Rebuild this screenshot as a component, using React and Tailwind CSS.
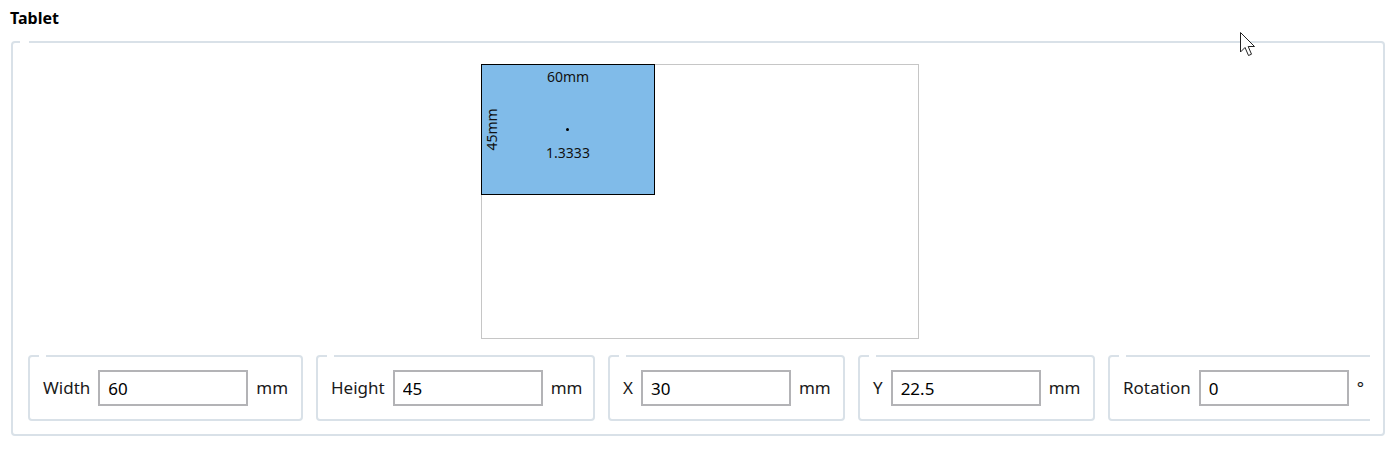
import React from "react";

const font = { fontFamily: '"Noto Sans", "Open Sans", sans-serif' };

const fields = [
  { label: "Width", value: "60", unit: "mm", w: "w-[275px]" },
  { label: "Height", value: "45", unit: "mm", w: "w-[279px]" },
  { label: "X", value: "30", unit: "mm", w: "w-[237px]" },
  { label: "Y", value: "22.5", unit: "mm", w: "w-[237px]" },
  { label: "Rotation", value: "0", unit: "°", w: "w-[270px]" },
];

// groupbox with the empty header notch in the top border
const Group = ({ className = "", notch = "left-[8px] w-[8px]", children }) => (
  <div className={`relative border-2 border-[#d9e1e8] rounded-[4px] ${className}`}>
    <span className={`absolute -top-[2px] h-[2px] bg-white ${notch}`}></span>
    {children}
  </div>
);

const Field = ({ label, value, unit, w }) => (
  <Group className={`${w} shrink-0 h-[66px] flex items-center pl-[13px]`} notch="left-[9px] w-[7px]">
    <span className="text-[17px] text-[#1a1a1a] mr-[8px]">{label}</span>
    <input
      readOnly
      value={value}
      className="w-[150px] h-[36px] border-2 border-[#b3b3b6] px-[8px] text-[17px] text-black outline-none"
      style={font}
    />
    <span className="text-[17px] text-[#1a1a1a] ml-[8px]">{unit}</span>
  </Group>
);

const Cursor = () => (
  <svg className="absolute left-[1239px] top-[31px]" width="20" height="28" viewBox="0 0 20 28">
    <path
      d="M1.5 1.5 L1.5 21 L6 16.5 L9.5 24.5 L12.5 23.2 L9.2 15.5 L15.5 15.5 Z"
      fill="white"
      stroke="#222"
      strokeWidth="1"
      strokeLinejoin="round"
    />
  </svg>
);

export default function App() {
  return (
    <div className="relative w-[1395px] h-[452px] bg-white overflow-hidden" style={font}>
      <div className="pl-[10px] pt-[8px] text-[16px] font-bold text-black leading-[21px]">Tablet</div>

      <Group className="mx-[11px] mt-[12px] h-[395px] w-[1374px] pt-[21px]" notch="left-[7px] w-[9px]">
        {/* preview canvas */}
        <div className="ml-[468px] w-[438px] h-[275px] border border-[#c6c6c6] relative">
          <div className="absolute -left-px -top-px w-[174px] h-[131px] bg-[#80bbe9] border border-black">
            <div className="absolute top-[1px] left-0 right-0 text-center text-[14px] text-[#111]">60mm</div>
            <div className="absolute left-[2px] top-[64px] -translate-y-1/2 w-[14px] h-[46px] flex items-center justify-center">
              <span className="-rotate-90 text-[14px] text-[#111] whitespace-nowrap">45mm</span>
            </div>
            <div className="absolute left-[84px] top-[63px] w-[3px] h-[3px] bg-black rounded-full"></div>
            <div className="absolute top-[77px] left-0 right-0 text-center text-[14px] text-[#111]">1.3333</div>
          </div>
        </div>

        {/* numeric fields */}
        <div className="mt-[16px] ml-[15px] mr-[13px] flex gap-[13px] overflow-hidden">
          {fields.map((f) => (
            <Field key={f.label} {...f} />
          ))}
        </div>
      </Group>

      <Cursor />
    </div>
  );
}
